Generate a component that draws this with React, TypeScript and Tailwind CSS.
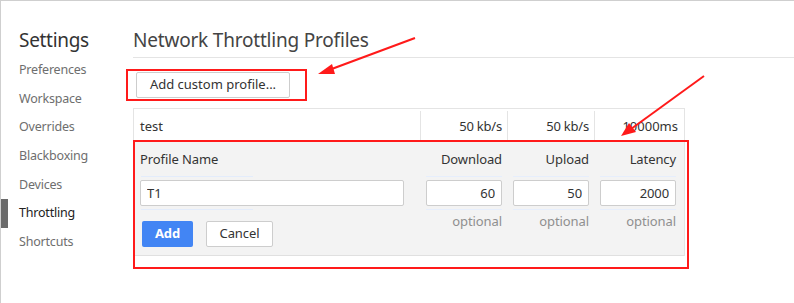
import React from "react";

const navItems = [
  "Preferences",
  "Workspace",
  "Overrides",
  "Blackboxing",
  "Devices",
  "Throttling",
  "Shortcuts",
];

function NumField(props: { value: string }) {
  return (
    <div className="flex flex-col items-end">
      <div className="w-full border-y border-[#e6eefc] py-[3px] -my-[4px]">
        <input
          readOnly
          value={props.value}
          className="w-full h-[26px] bg-white border border-[#cdcdcd] rounded-[2px] px-[6px] text-right text-[13px] text-[#333] outline-none"
        />
      </div>
      <span className="mt-[6px] leading-[18px] text-[13px] tracking-[-0.1px] text-[#8f8f8f]">optional</span>
    </div>
  );
}

export default function App() {
  return (
    <div
      className="relative w-[794px] h-[303px] bg-white overflow-hidden border-t border-l border-[#cfcfcf] flex text-[#333]"
      style={{ fontFamily: '"Noto Sans", "Open Sans", sans-serif' }}
    >
      {/* sidebar */}
      <div className="w-[132px] shrink-0 flex flex-col">
        <div className="pt-[25px] pl-[18px] h-[55px] text-[19px] tracking-[-0.3px] leading-[28px] text-[#333]">
          Settings
        </div>
        {navItems.map((item) => (
          <div
            key={item}
            className={
              item === "Throttling"
                ? "h-[28.67px] flex items-center border-l-[7px] border-[#6b6b6b] pl-[11px] text-[12.5px] tracking-[-0.2px] text-[#222]"
                : "h-[28.67px] flex items-center border-l-[7px] border-transparent pl-[11px] text-[12.5px] tracking-[-0.2px] text-[#6e6e6e]"
            }
          >
            {item}
          </div>
        ))}
      </div>

      {/* main */}
      <div className="flex-1 flex flex-col">
        <div className="h-[57px] pt-[25px] text-[19px] tracking-[-0.2px] leading-[28px] text-[#444] border-b border-[#e4e4e4]">
          Network Throttling Profiles
        </div>
        <div className="pt-[13px] pl-[3px]">
          <button className="h-[26px] w-[154px] bg-white border border-[#cdcdcd] rounded-[2px] text-[13px] text-[#333]">
            Add custom profile...
          </button>
        </div>

        <div className="mt-[10px] w-[552px] border-t border-x border-[#e4e4e4] text-[13px]">
          <div className="h-[33px] flex pt-[2px]">
            <div className="w-[286px] pl-[6px] flex items-center">test</div>
            <div className="w-[87px] pr-[5px] flex items-center justify-end border-l border-[#e4e4e4] tracking-[-0.2px]">50 kb/s</div>
            <div className="w-[87px] pr-[5px] flex items-center justify-end border-l border-[#e4e4e4] tracking-[-0.2px]">50 kb/s</div>
            <div className="flex-1 pr-[6px] flex items-center justify-end border-l border-[#e4e4e4]">10000ms</div>
          </div>
          <div className="bg-[#f3f3f3] border-b border-[#e0e0e0] pt-[8px] pb-[8px] pl-[6px] grid grid-cols-[264px_98px_87px_87px] tracking-[-0.1px]">
            <div className="leading-[18px]">Profile Name</div>
            <div className="leading-[18px] text-right pl-[22px]">Download</div>
            <div className="leading-[18px] text-right pl-[11px]">Upload</div>
            <div className="leading-[18px] text-right pl-[11px]">Latency</div>

            <div className="mt-[12px] flex flex-col">
              <div className="relative">
                <div className="absolute left-[1px] -top-[4px] w-[112px] border-t border-[#e3ecfb]" />
                <input
                  readOnly
                  value="T1"
                  className="w-full h-[26px] bg-white border border-[#cdcdcd] rounded-[2px] px-[6px] text-[13px] text-[#333] outline-none"
                />
                <div className="absolute left-[1px] -bottom-[4px] w-[112px] border-t border-[#e3ecfb]" />
              </div>
              <div className="mt-[15px] flex gap-[13px] pl-[2px]">
                <button className="h-[26px] w-[51px] bg-[#4285f4] rounded-[2px] text-white font-bold text-[13px]">
                  Add
                </button>
                <button className="h-[26px] w-[67px] bg-white border border-[#cdcdcd] rounded-[2px] text-[13px] text-[#333]">
                  Cancel
                </button>
              </div>
            </div>
            <div className="mt-[12px] pl-[22px]">
              <NumField value="60" />
            </div>
            <div className="mt-[12px] pl-[11px]">
              <NumField value="50" />
            </div>
            <div className="mt-[12px] pl-[11px]">
              <NumField value="2000" />
            </div>
          </div>
        </div>
      </div>

      {/* annotations */}
      <div className="absolute left-[125px] top-[68px] w-[181px] h-[32px] border-2 border-[#ff1a1a]" />
      <div className="absolute left-[132px] top-[139px] w-[556px] h-[129px] border-2 border-[#ff1a1a]" />
      <svg className="absolute left-0 top-0 pointer-events-none" width="794" height="303">
        <line x1="414" y1="37" x2="328" y2="69" stroke="#ff1a1a" strokeWidth="2" />
        <polygon points="317,73 331,63 334,73" fill="#ff1a1a" />
        <line x1="703" y1="75" x2="630" y2="128" stroke="#ff1a1a" strokeWidth="2" />
        <polygon points="620,135 628,122 635,131" fill="#ff1a1a" />
      </svg>
    </div>
  );
}
